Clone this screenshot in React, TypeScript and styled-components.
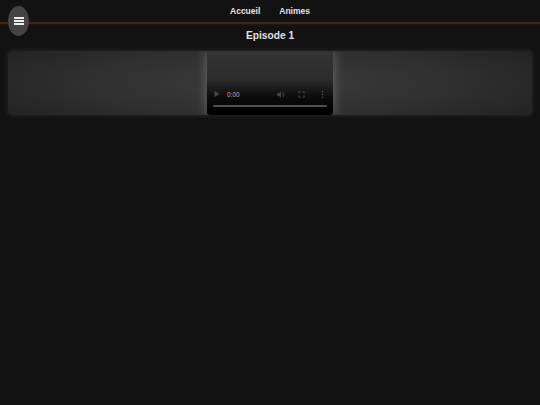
import React from 'react';
import styled, { createGlobalStyle } from 'styled-components';

const GlobalStyle = createGlobalStyle`
  html, body {
    margin: 0;
    padding: 0;
    height: 100%;
    background-color: #121212;
    font-family: "Liberation Sans", Arial, sans-serif;
  }
`;

const App: React.FC = () => {
  return (
    <Page>
      <GlobalStyle />
      <MenuButton aria-label="Menu">
        <MenuBar />
        <MenuBar />
        <MenuBar />
      </MenuButton>
      <Header>
        <NavLink href="#">Accueil</NavLink>
        <NavLink href="#">Animes</NavLink>
      </Header>
      <Title>Episode 1</Title>
      <PlayerBand>
        <VideoBox>
          <Controls>
            <ControlRow>
              <PlayIcon viewBox="0 0 8 8">
                <path d="M1.5 1v6l5-3z" fill="#4a4a4a" />
              </PlayIcon>
              <Time>0:00</Time>
              <Spacer />
              <ControlIcon viewBox="0 0 10 10">
                <path d="M1 3.6h2L5.6 1.4v7.2L3 6.4H1z" fill="#444" />
                <path d="M6.8 3a2.6 2.6 0 0 1 0 4M7.6 1.8a4.2 4.2 0 0 1 0 6.4" stroke="#444" strokeWidth="0.9" fill="none" />
              </ControlIcon>
              <ControlIcon viewBox="0 0 10 10">
                <path d="M2 4V2h2M6 2h2v2M8 6v2H6M4 8H2V6" stroke="#4c4c4c" strokeWidth="1" fill="none" />
              </ControlIcon>
              <ControlIcon viewBox="0 0 10 10">
                <circle cx="5" cy="2" r="0.8" fill="#555" />
                <circle cx="5" cy="5" r="0.8" fill="#555" />
                <circle cx="5" cy="8" r="0.8" fill="#555" />
              </ControlIcon>
            </ControlRow>
            <Progress />
          </Controls>
        </VideoBox>
      </PlayerBand>
    </Page>
  );
};

export default App;

const Page = styled.div`
  position: relative;
  min-height: 405px;
  overflow: hidden;
  background-color: #121212;
`;

const Header = styled.nav`
  display: flex;
  justify-content: center;
  align-items: center;
  gap: 19px;
  height: 24px;
  box-sizing: border-box;
  padding-bottom: 1px;
  border-bottom: 2px solid #4c2212;
  box-shadow: 0 1px 2px rgba(70, 30, 15, 0.5);
`;

const NavLink = styled.a`
  color: #e4e4e4;
  font-size: 8.5px;
  font-weight: 700;
  text-decoration: none;
`;

const MenuButton = styled.button`
  position: absolute;
  top: 6px;
  left: 8px;
  width: 21px;
  height: 30px;
  padding: 0;
  border: none;
  border-radius: 50%;
  background-color: #444;
  display: flex;
  flex-direction: column;
  align-items: center;
  justify-content: center;
  gap: 1.5px;
`;

const MenuBar = styled.span`
  display: block;
  width: 10px;
  height: 1.7px;
  background-color: #eee;
`;

const Title = styled.h1`
  margin: 0;
  padding-top: 5px;
  height: 27px;
  box-sizing: border-box;
  text-align: center;
  color: #e0e0e0;
  font-size: 10.2px;
  line-height: 13px;
  font-weight: 700;
`;

const PlayerBand = styled.section`
  display: flex;
  justify-content: center;
  margin: 0 8px;
  height: 64px;
  border-radius: 4px;
  overflow: hidden;
  background: radial-gradient(ellipse 60% 90% at center, #3c3c3c 0%, #2f2f2f 60%, #232323 100%);
  box-shadow: 0 0 4px 1px rgba(255, 255, 255, 0.08);
`;

const VideoBox = styled.div`
  position: relative;
  width: 126px;
  height: 64px;
  border-radius: 0 0 3px 3px;
  background: linear-gradient(to bottom, #343434 0%, #2c2c2c 45%, #0b0b0b 72%, #000 100%);
  box-shadow: 0 0 11px 1px rgba(255, 255, 255, 0.24);
`;

const Controls = styled.div`
  position: absolute;
  left: 6px;
  right: 6px;
  bottom: 8px;
`;

const ControlRow = styled.div`
  display: flex;
  align-items: center;
  height: 10px;
  margin-bottom: 6px;
`;

const PlayIcon = styled.svg`
  width: 8px;
  height: 8px;
  margin-right: 6px;
`;

const ControlIcon = styled.svg`
  width: 9px;
  height: 9px;
  margin-left: 12px;
`;

const Time = styled.span`
  color: #b0b0b0;
  font-size: 6.5px;
`;

const Spacer = styled.div`
  flex: 1;
`;

const Progress = styled.div`
  height: 2px;
  background-color: #505050;
  border-radius: 1px;
`;
